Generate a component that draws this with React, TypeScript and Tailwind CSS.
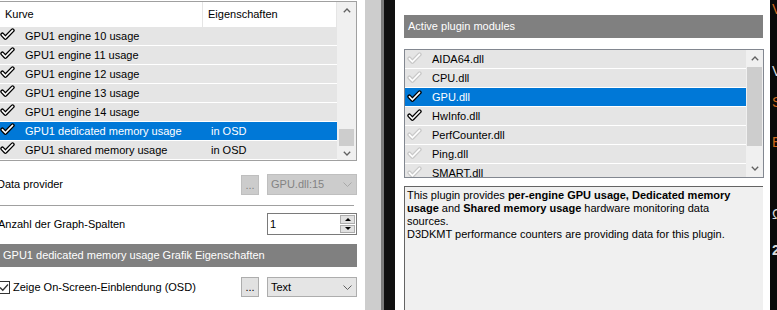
import React from "react";

type Row = { name: string; prop?: string; on?: boolean; selected?: boolean };

const curves: Row[] = [
  { name: "GPU1 engine 10 usage" },
  { name: "GPU1 engine 11 usage" },
  { name: "GPU1 engine 12 usage" },
  { name: "GPU1 engine 13 usage" },
  { name: "GPU1 engine 14 usage" },
  { name: "GPU1 dedicated memory usage", prop: "in OSD", selected: true },
  { name: "GPU1 shared memory usage", prop: "in OSD" },
];

const plugins: Row[] = [
  { name: "AIDA64.dll" },
  { name: "CPU.dll" },
  { name: "GPU.dll", on: true, selected: true },
  { name: "HwInfo.dll", on: true },
  { name: "PerfCounter.dll" },
  { name: "Ping.dll" },
  { name: "SMART.dll" },
];

function Check({ faded = false }: { faded?: boolean }) {
  return (
    <svg width="15" height="13" viewBox="0 0 15 13" className="shrink-0">
      <path
        d="M2.4 6.6 L5.4 9.8 L12.6 2.4"
        fill="none"
        stroke={faded ? "#c9c9c9" : "#000"}
        strokeWidth="4.2"
        strokeLinecap="round"
        strokeLinejoin="round"
      />
      <path
        d="M2.4 6.6 L5.4 9.8 L12.6 2.4"
        fill="none"
        stroke="#fff"
        strokeWidth="1.6"
        strokeLinecap="round"
        strokeLinejoin="round"
      />
    </svg>
  );
}

function Chevron({ up = false, color = "#606060" }: { up?: boolean; color?: string }) {
  return (
    <svg width="8" height="5" viewBox="0 0 8 5">
      <polyline
        points={up ? "0.8,4.2 4,1 7.2,4.2" : "0.8,0.8 4,4 7.2,0.8"}
        fill="none"
        stroke={color}
        strokeWidth="1.3"
      />
    </svg>
  );
}

function ComboArrow({ color }: { color: string }) {
  return (
    <svg width="9" height="5" viewBox="0 0 9 5">
      <polyline points="0.5,0.5 4.5,4.5 8.5,0.5" fill="none" stroke={color} strokeWidth="1" />
    </svg>
  );
}

function LeftPanel() {
  return (
    <div className="w-[365px] shrink-0 bg-white flex flex-col text-[11px] text-black">
      {/* curve list */}
      <div className="mt-[1px] w-[357px] h-[160px] border-t border-r border-b border-[#a0a0a0] flex">
        <div className="w-[337px] flex flex-col">
          <div className="h-[25px] flex items-center relative">
            <span className="ml-[5px] w-[197px]">Kurve</span>
            <div className="w-px h-full bg-[#e5e5e5]" />
            <span className="ml-[5px] flex-1">Eigenschaften</span>
            <div className="w-px h-full bg-[#e5e5e5]" />
          </div>
          {curves.map((r) => (
            <div
              key={r.name}
              className={`h-[19px] border-b border-white flex items-center ${
                r.selected ? "bg-[#0078d7] text-white" : "bg-[#e5e5e5]"
              }`}
            >
              <div className="w-[25px] self-start pt-[1px]">
                <Check />
              </div>
              <span className="w-[186px] whitespace-nowrap">{r.name}</span>
              <span className="whitespace-nowrap">{r.prop}</span>
            </div>
          ))}
        </div>
        <div className="w-[19px] bg-[#f0f0f0] flex flex-col items-center">
          <div className="h-[17px] flex items-center justify-center">
            <Chevron up />
          </div>
          <div className="flex-1" />
          <div className="h-[17px] w-[15px] bg-[#cdcdcd]" />
          <div className="h-[14px] flex items-center justify-center">
            <Chevron />
          </div>
        </div>
      </div>

      {/* data provider */}
      <div className="mt-[13px] h-[21px] flex items-center">
        <span className="ml-[-3px] w-[244px] whitespace-nowrap">Data provider</span>
        <div className="w-[18px] h-[20px] bg-[#cccccc] border border-[#bfbfbf] text-[#838383] flex items-end justify-center pb-[3px] leading-none">
          ...
        </div>
        <div className="ml-[8px] w-[90px] h-[21px] bg-[#cccccc] border border-[#bfbfbf] text-[#838383] flex items-center justify-between pl-[3px] pr-[4px]">
          <span>GPU.dll:15</span>
          <ComboArrow color="#a8a8a8" />
        </div>
      </div>

      <div className="mt-[10px] w-[354px] h-px bg-[#a0a0a0]" />

      {/* columns */}
      <div className="mt-[7px] h-[22px] flex items-center">
        <span className="ml-[-2px] w-[269px] whitespace-nowrap">Anzahl der Graph-Spalten</span>
        <div className="w-[90px] h-[22px] border border-[#7a7a7a] bg-white flex">
          <span className="flex-1 pl-[2px] pt-[2px]">1</span>
          <div className="w-[17px] flex flex-col gap-px p-px">
            <div className="flex-1 bg-[#e1e1e1] border border-[#adadad] flex items-center justify-center">
              <div className="w-0 h-0 border-l-[3px] border-r-[3px] border-b-[3px] border-l-transparent border-r-transparent border-b-black" />
            </div>
            <div className="flex-1 bg-[#e1e1e1] border border-[#adadad] flex items-center justify-center">
              <div className="w-0 h-0 border-l-[3px] border-r-[3px] border-t-[3px] border-l-transparent border-r-transparent border-t-black" />
            </div>
          </div>
        </div>
      </div>

      {/* section header */}
      <div className="mt-[9px] w-[357px] h-[23px] bg-[#808080] text-white flex items-center pl-[3px] whitespace-nowrap">
        GPU1 dedicated memory usage Grafik Eigenschaften
      </div>

      {/* osd */}
      <div className="mt-[10px] h-[20px] flex items-center">
        <div className="ml-[-3px] w-[13px] h-[13px] border border-[#333] bg-white flex items-center justify-center">
          <svg width="10" height="9" viewBox="0 0 10 9">
            <polyline points="1,4.5 3.8,7.3 9,1.5" fill="none" stroke="#333" strokeWidth="1.3" />
          </svg>
        </div>
        <span className="ml-[3px] w-[228px] whitespace-nowrap">Zeige On-Screen-Einblendung (OSD)</span>
        <div className="w-[18px] h-[20px] bg-[#e1e1e1] border border-[#adadad] flex items-end justify-center pb-[3px] leading-none">
          ...
        </div>
        <div className="ml-[8px] w-[90px] h-[20px] bg-[#e5e5e5] border border-[#adadad] flex items-center justify-between pl-[3px] pr-[4px]">
          <span>Text</span>
          <ComboArrow color="#606060" />
        </div>
      </div>
    </div>
  );
}

function RightPanel() {
  return (
    <div className="w-[375px] shrink-0 bg-white flex flex-col pl-[9px] font-['Liberation_Sans',Arial,sans-serif] text-[11px] text-black">
      <div className="mt-[15px] w-[359px] h-[23px] bg-[#808080] text-white flex items-center pl-[4px]">
        Active plugin modules
      </div>

      <div className="mt-[11px] w-[360px] h-[129px] border border-[#828790] flex overflow-hidden">
        <div className="w-[341px] flex flex-col overflow-hidden">
          {plugins.map((p) => (
            <div
              key={p.name}
              className={`h-[19px] shrink-0 border-b border-white flex items-center ${
                p.selected ? "bg-[#0078d7] text-white" : "bg-[#e5e5e5]"
              }`}
            >
              <div className="ml-[2px] w-[25px] self-start pt-[2px]">
                <Check faded={!p.on} />
              </div>
              <span>{p.name}</span>
            </div>
          ))}
        </div>
        <div className="w-[17px] bg-[#f0f0f0] flex flex-col items-center">
          <div className="h-[17px] flex items-center justify-center">
            <Chevron up />
          </div>
          <div className="h-[79px] w-[15px] bg-[#cdcdcd]" />
          <div className="flex-1" />
          <div className="h-[17px] flex items-center justify-center">
            <Chevron />
          </div>
        </div>
      </div>

      <div className="mt-[8px] w-[359px] flex-1 bg-[#f0f0f0] border-t border-l border-[#646464] pl-[2px] pt-[2px] leading-[13px] whitespace-nowrap">
        <div>
          This plugin provides <b>per-engine GPU usage, Dedicated memory</b>
        </div>
        <div>
          <b>usage</b> and <b>Shared memory usage</b> hardware monitoring data
        </div>
        <div>sources.</div>
        <div>D3DKMT performance counters are providing data for this plugin.</div>
      </div>
    </div>
  );
}

export default function App() {
  return (
    <div className="w-[777px] h-[310px] overflow-hidden flex font-['Liberation_Sans',Arial,sans-serif]">
      <LeftPanel />
      <div className="w-[16px] shrink-0 bg-[#cdcdcd]" />
      <div className="w-[3px] shrink-0 bg-[#7c7c7c]" />
      <div className="w-[11px] shrink-0 bg-[#101010]" />
      <RightPanel />
      <div className="flex-1 bg-[#0a0a0a] flex flex-col text-[14px] leading-none pl-[2px] overflow-hidden whitespace-nowrap">
        <span className="mt-[2px] text-[#d2691e]">V</span>
        <span className="mt-[48px] text-[#dddddd]">V</span>
        <span className="mt-[17px] text-[#d2691e]">S</span>
        <span className="mt-[26px] text-[#d2691e]">E</span>
        <span className="mt-[58px] text-[#dddddd]">Ω</span>
        <span className="mt-[22px] text-[#dddddd] font-bold">2</span>
      </div>
    </div>
  );
}
